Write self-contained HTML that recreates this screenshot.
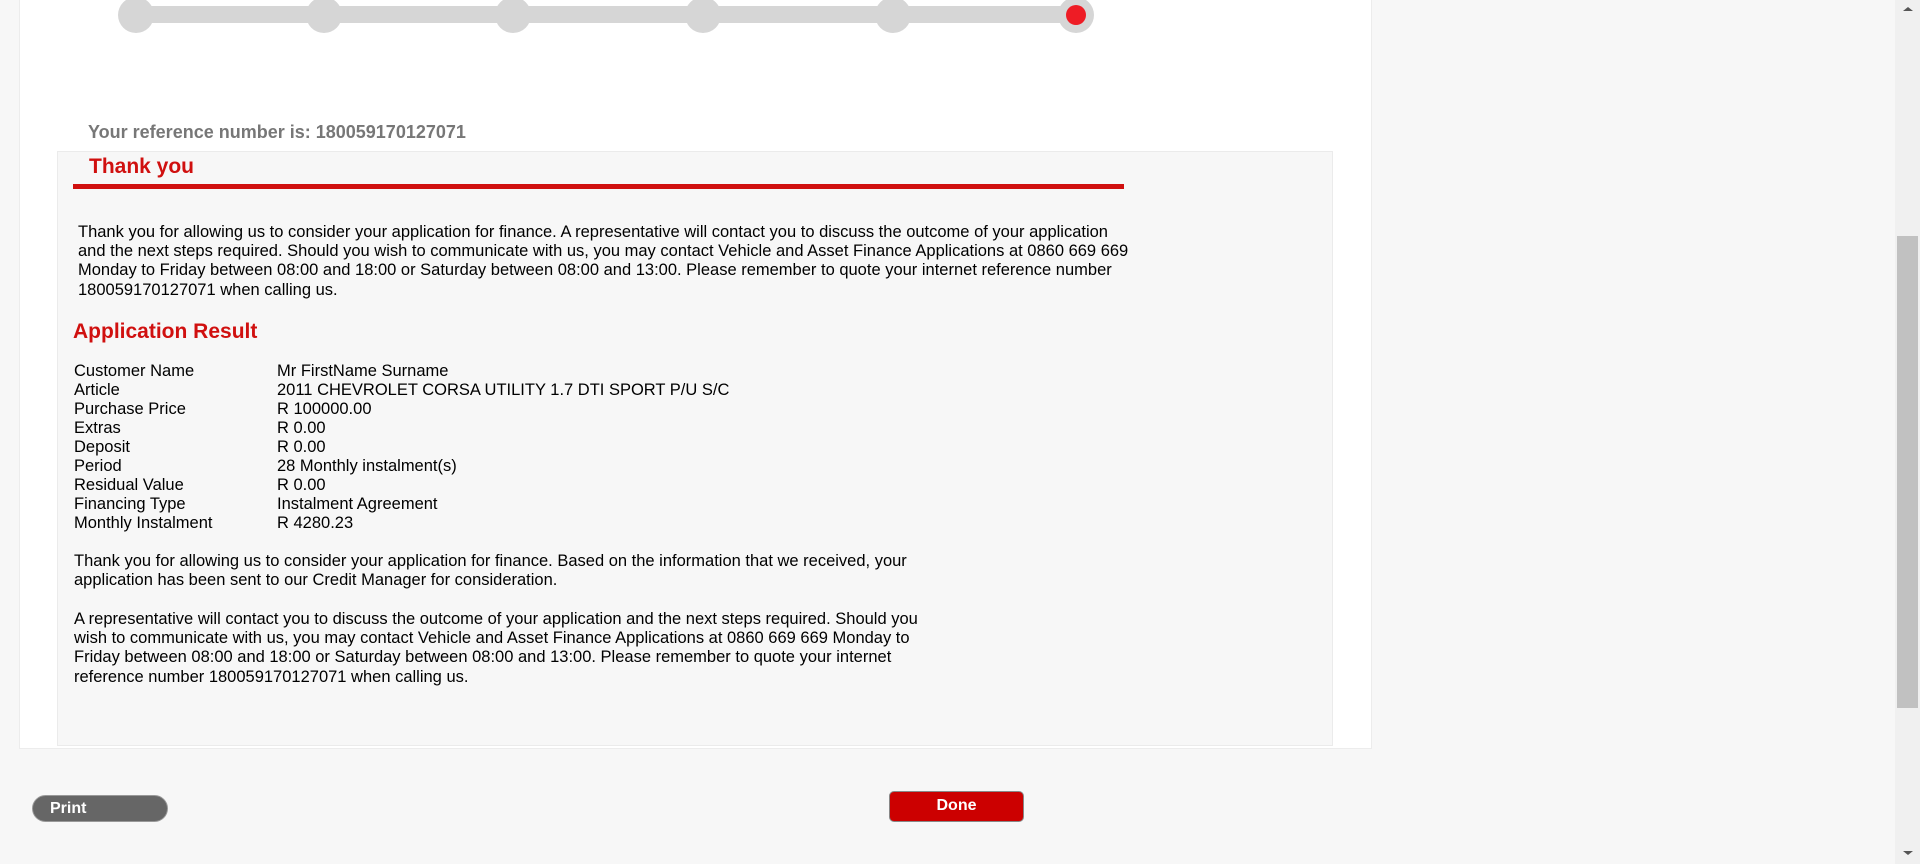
<!DOCTYPE html>
<html><head><meta charset="utf-8"><style>
*{margin:0;padding:0;box-sizing:border-box}
body{width:1920px;height:864px;background:#f7f7f7;font-family:"Liberation Sans",Arial,sans-serif;position:relative;overflow:hidden;color:#000}
.panel{position:absolute;left:19px;top:0;width:1353px;height:749px;background:#fff;border:1px solid #ececec;border-top:none}
.line{position:absolute;left:136px;top:6px;width:940px;height:17px;background:#d6d6d6}
.dot{position:absolute;top:-3px;width:36px;height:36px;border-radius:50%;background:#d6d6d6;margin-left:-18px}
.red{position:absolute;left:8px;top:8px;width:20px;height:20px;border-radius:50%;background:#ee1c25}
.ref{position:absolute;left:88px;top:122px;font-size:18px;font-weight:bold;color:#777}
.box{position:absolute;left:57px;top:151px;width:1276px;height:595px;background:#f7f7f7;border:1px solid #ebebeb}
.ty{position:absolute;left:89px;top:155px;font-size:21px;font-weight:bold;color:#d0100f}
.bar{position:absolute;left:73px;top:184px;width:1051px;height:5px;background:#d0100f}
.p{position:absolute;font-size:16.5px;line-height:19.2px}
.ar{position:absolute;left:73px;top:320px;font-size:21px;font-weight:bold;color:#d0100f}
.tbl{position:absolute;left:74px;top:362px;font-size:16.5px;line-height:19px}
.tbl div{height:19px;position:relative}
.tbl span{position:absolute;left:203px;white-space:nowrap}
.btn{position:absolute;color:#fff;font-weight:bold;font-size:16px}
.sb{position:absolute;left:1895px;top:0;width:25px;height:864px;background:#f0f0f0}
</style></head><body>
<div class="panel"></div>
<div class="line"></div>
<div class="dot" style="left:136px"></div>
<div class="dot" style="left:324px"></div>
<div class="dot" style="left:513px"></div>
<div class="dot" style="left:703px"></div>
<div class="dot" style="left:893px"></div>
<div class="dot" style="left:1076px"><div class="red"></div></div>
<div class="ref">Your reference number is: 180059170127071</div>
<div class="box"></div>
<div class="ty">Thank you</div>
<div class="bar"></div>
<div class="p" style="left:78px;top:223px;white-space:nowrap">Thank you for allowing us to consider your application for finance. A representative will contact you to discuss the outcome of your application<br>and the next steps required. Should you wish to communicate with us, you may contact Vehicle and Asset Finance Applications at 0860 669 669<br>Monday to Friday between 08:00 and 18:00 or Saturday between 08:00 and 13:00. Please remember to quote your internet reference number<br>180059170127071 when calling us.</div>
<div class="ar">Application Result</div>
<div class="tbl">
<div>Customer Name<span>Mr FirstName Surname</span></div>
<div>Article<span>2011 CHEVROLET CORSA UTILITY 1.7 DTI SPORT P/U S/C</span></div>
<div>Purchase Price<span>R 100000.00</span></div>
<div>Extras<span>R 0.00</span></div>
<div>Deposit<span>R 0.00</span></div>
<div>Period<span>28 Monthly instalment(s)</span></div>
<div>Residual Value<span>R 0.00</span></div>
<div>Financing Type<span>Instalment Agreement</span></div>
<div>Monthly Instalment<span>R 4280.23</span></div>
</div>
<div class="p" style="left:74px;top:552px;white-space:nowrap">Thank you for allowing us to consider your application for finance. Based on the information that we received, your<br>application has been sent to our Credit Manager for consideration.</div>
<div class="p" style="left:74px;top:610px;white-space:nowrap">A representative will contact you to discuss the outcome of your application and the next steps required. Should you<br>wish to communicate with us, you may contact Vehicle and Asset Finance Applications at 0860 669 669 Monday to<br>Friday between 08:00 and 18:00 or Saturday between 08:00 and 13:00. Please remember to quote your internet<br>reference number 180059170127071 when calling us.</div>
<div class="btn" style="left:32px;top:795px;width:136px;height:27px;border-radius:14px;background:#666;border:1px solid #999;padding:4px 0 0 17px">Print</div>
<div class="btn" style="left:889px;top:791px;width:135px;height:31px;border-radius:5px;background:#cc0000;border:1px solid #888;text-align:center;padding-top:5px">Done</div>
<div class="sb">
<div style="position:absolute;left:2px;top:236px;width:21px;height:472px;background:#c1c1c1"></div>
<div style="position:absolute;left:8px;top:7px;border-left:5px solid transparent;border-right:5px solid transparent;border-bottom:4px solid #555"></div>
<div style="position:absolute;left:8px;top:851px;border-left:5px solid transparent;border-right:5px solid transparent;border-top:4px solid #555"></div>
</div>
</body></html>
